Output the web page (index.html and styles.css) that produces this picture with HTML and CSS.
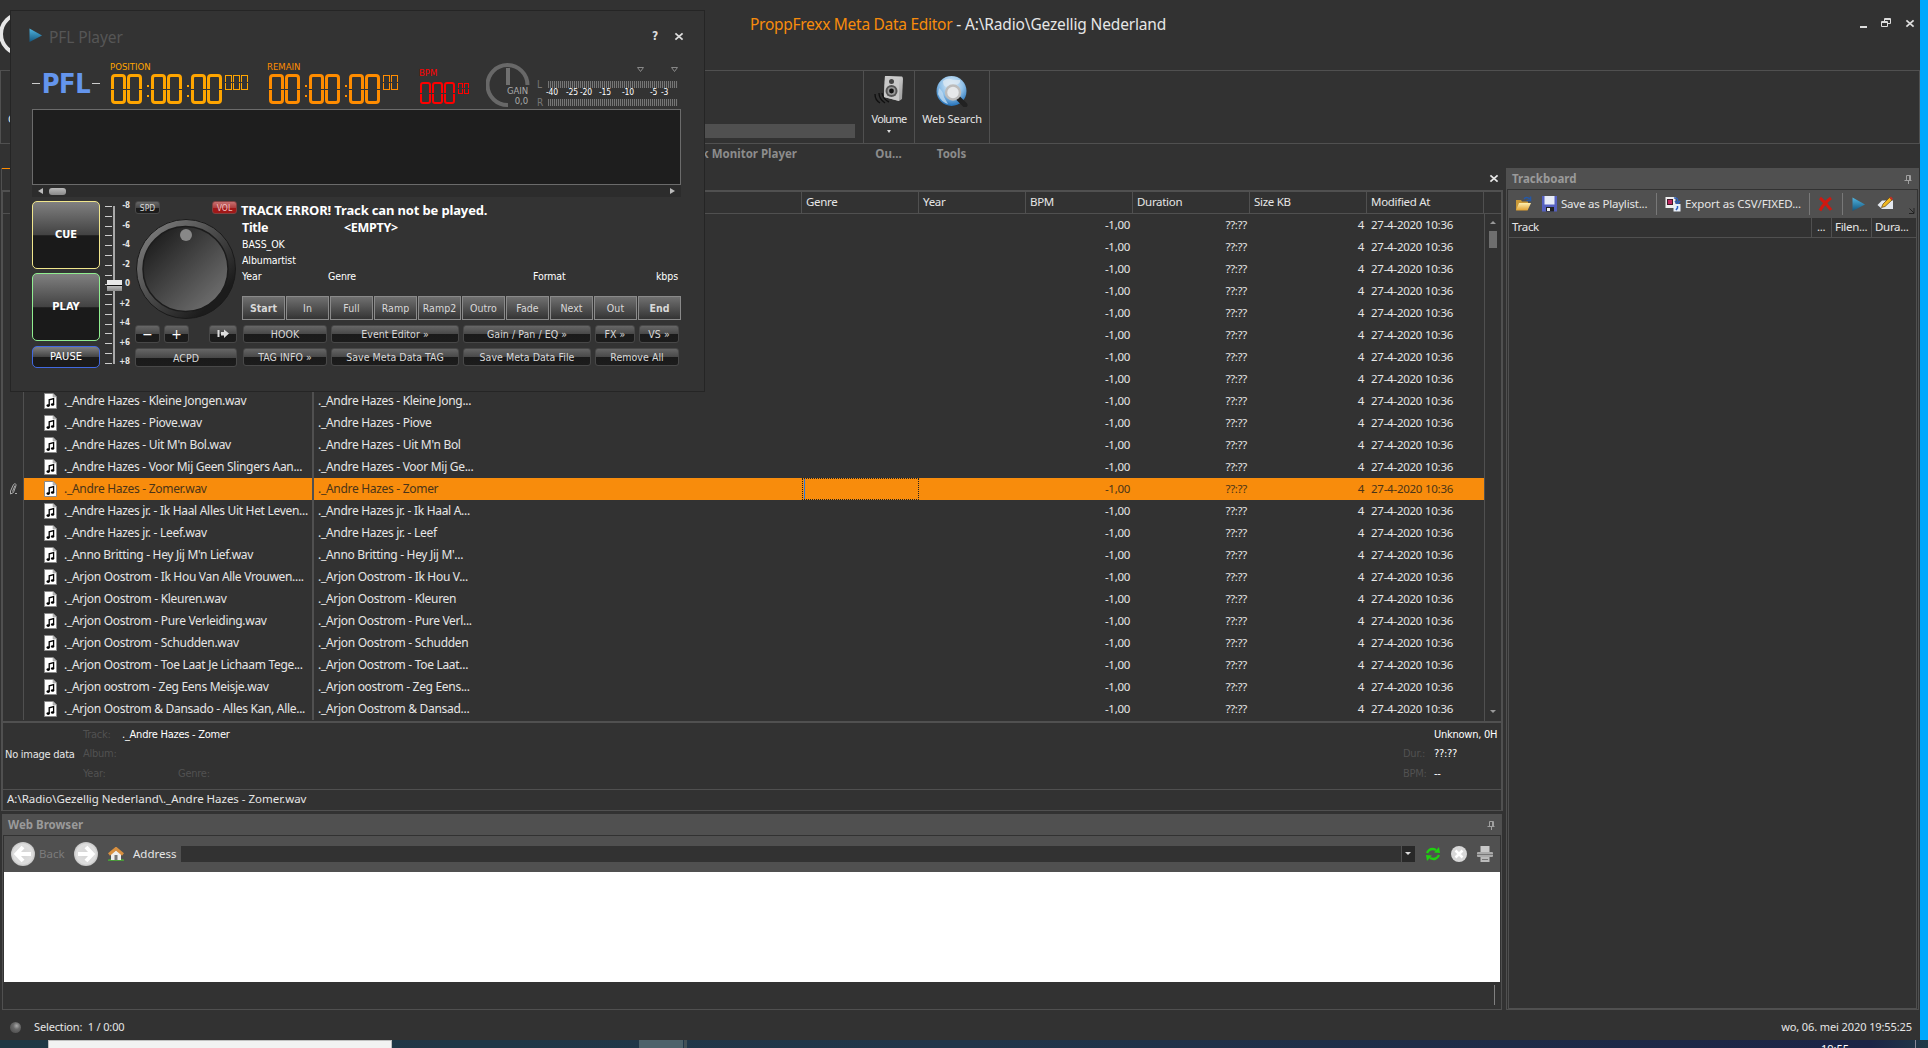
FILE: index.html
```html
<!DOCTYPE html>
<html lang="nl">
	<head>
		<meta charset="utf-8">
		<title>ProppFrexx Meta Data Editor</title>
		<link rel="stylesheet" href="styles.css">
	</head>
	<body>
		<svg class="defs" width="0" height="0">
			<defs>
				<linearGradient id="blue" x1="0" y1="0" x2="0" y2="1"><stop offset="0" stop-color="#4fb4e0"/><stop offset="1" stop-color="#14567e"/></linearGradient>
				<linearGradient id="folder" x1="0" y1="0" x2="0" y2="1"><stop offset="0" stop-color="#fff0b0"/><stop offset="1" stop-color="#e0a030"/></linearGradient>
				<linearGradient id="silver" x1="0" y1="0" x2="1" y2="1"><stop offset="0" stop-color="#eee"/><stop offset="1" stop-color="#999"/></linearGradient>
				<linearGradient id="rim" x1="0" y1="0" x2="1" y2="1"><stop offset="0.1" stop-color="#7c7c7c"/><stop offset="0.8" stop-color="#1c1c1c"/></linearGradient>
				<linearGradient id="knob" x1="0" y1="0" x2="1" y2="1"><stop offset="0.1" stop-color="#1c1c1c"/><stop offset="0.9" stop-color="#707070"/></linearGradient>
				<radialGradient id="globe" cx="0.5" cy="0.3" r="0.7"><stop offset="0" stop-color="#eaf4fc"/><stop offset="0.55" stop-color="#8fc0e8"/><stop offset="1" stop-color="#2270b8"/></radialGradient>
				<radialGradient id="ball" cx="0.5" cy="0.5" r="0.5"><stop offset="0" stop-color="#d4d4d4"/><stop offset="0.8" stop-color="#dedede"/><stop offset="1" stop-color="#c4c4c4"/></radialGradient>
				<symbol id="note" viewBox="0 0 13 16">
					<path d="M0.5 0.5H9L12.5 4V15.5H0.5Z" fill="#fff" stroke="#8a8a8a"/>
					<path d="M9 0.5V4H12.5Z" fill="#bbb" stroke="#999" stroke-width="0.5"/>
					<path d="M5.2 12.5V6.8L9.6 5.6V11.3" fill="none" stroke="#000" stroke-width="1.3"/>
					<ellipse cx="4.2" cy="12.6" rx="1.7" ry="1.3"/><ellipse cx="8.6" cy="11.5" rx="1.7" ry="1.3"/>
				</symbol>
				<symbol id="play" viewBox="0 0 14 15">
					<path d="M0.5 0.5L13 7.5L0.5 14Z" fill="url(#blue)"/>
				</symbol>
				<symbol id="cross" viewBox="0 0 10 10">
					<path d="M1 1.5L9 8.5M9 1.5L1 8.5" stroke="currentColor" stroke-width="2"/>
				</symbol>
				<symbol id="pin" viewBox="0 0 8 9">
					<path d="M2.5 0.5H6.5V5.5M2.5 0.5V5.5M0.5 5.5H7.5M4.5 6V9M5.5 0.5V5.5" stroke="#a0a0a0" fill="none"/>
				</symbol>
			</defs>
		</svg>

		<div class="app">
			<div class="titlebar">
				<svg class="orb" width="12" height="40" viewBox="0 0 12 40"><circle cx="21" cy="20" r="20" fill="none" stroke="#e8e8e8" stroke-width="4"/></svg>
				<h1 class="caption"><span>ProppFrexx Meta Data Editor</span> - A:\Radio\Gezellig Nederland</h1>
				<div class="winbtns">
					<svg width="8" height="10"><rect y="8" width="7" height="2" fill="#ddd"/></svg>
					<svg width="10" height="10" fill="none" stroke="#ddd"><path d="M3.5 3V0.5H9.5V5.5H7M3.5 1.5H9.5M0.5 3.5H6.5V8.5H0.5ZM0.5 4.5H6.5"/></svg>
					<svg class="x" width="10" height="9"><use href="#cross"/></svg>
				</div>
			</div>

			<div class="ribbon">
				<div class="group hiddengroup"><span>C</span><div class="graybox"></div></div>
				<div class="group volume">
					<svg width="32" height="32" viewBox="0 0 32 32">
						<path d="M2 19Q2 25 7 28M6 18Q6 24 12 28M9 18Q10 24 16 27" fill="none" stroke="#111" stroke-width="1.4"/>
						<path d="M12 1L29 1.5Q30 2 30 4L29 24L26 26L11 22Z" fill="url(#silver)"/>
						<path d="M12 1L26 3V26L11 22Z" fill="#c8c8c8"/>
						<circle cx="18.500" cy="6.500" r="2.500" fill="#444"/>
						<circle cx="18.500" cy="16" r="6" fill="#555"/><circle cx="18.500" cy="16" r="4" fill="#999"/><circle cx="18.500" cy="16" r="2.400" fill="#111"/>
					</svg>
					<span>Volume</span>
					<i class="down"></i>
				</div>
				<div class="group search">
					<svg width="32" height="32" viewBox="0 0 32 32">
						<circle cx="15.500" cy="16" r="15" fill="url(#globe)"/>
						<path d="M7 6Q12 2 17 5L24 5Q25 9 19 10Q14 9 10 12Q7 11 7 6Z" fill="#dce8f2" opacity=".8"/>
						<path d="M3 13Q7 16 8 22L12 29Q5 27 2 19Z" fill="#bfdcf4" opacity=".8"/>
						<path d="M22 23L29 30" stroke="#222" stroke-width="5" stroke-linecap="round"/>
						<circle cx="17" cy="17.500" r="7" fill="#e6e8ea" stroke="#bcbcbc" stroke-width="2.500"/>
					</svg>
					<span>Web Search</span>
				</div>
			</div>
			<div class="groupnames"><span>Track Monitor Player</span><span>Ou...</span><span>Tools</span></div>

			<div class="workspace">
				<div class="left">
					<div class="tabs"><svg width="10" height="9"><use href="#cross"/></svg></div>
					<div class="editor">
						<div class="row head">
							<span></span><span></span><span></span><span>Genre</span><span>Year</span><span>BPM</span><span>Duration</span><span>Size KB</span><span>Modified At</span>
						</div>
						<div class="gridbody">
							<div class="rows" id="rows"></div>
							<div class="scroll"><i class="up"></i><i class="thumb"></i><i class="down"></i></div>
						</div>
						<div class="details">
							<div class="noimage">No image data</div>
							<div class="tags">
								<div><label>Track:</label><b>._Andre Hazes - Zomer</b></div>
								<div><label>Album:</label></div>
								<div><label class="year">Year:</label><label>Genre:</label></div>
							</div>
							<div class="info">
								<div><label></label><b>Unknown, 0H</b></div>
								<div><label>Dur.:</label><b>??:??</b></div>
								<div><label>BPM:</label><b>--</b></div>
							</div>
						</div>
						<div class="path">A:\Radio\Gezellig Nederland\._Andre Hazes - Zomer.wav</div>
					</div>

					<div class="panel web">
						<div class="paneltitle"><span>Web Browser</span><svg width="8" height="9"><use href="#pin"/></svg></div>
						<div class="webbar">
							<svg width="24" height="24"><circle cx="12" cy="12" r="12" fill="url(#ball)"/><path d="M12 5L5.500 12L12 19M6 12H20" fill="none" stroke="#fff" stroke-width="4"/></svg>
							<span class="off">Back</span>
							<svg class="fwd" width="24" height="24"><circle cx="12" cy="12" r="12" fill="url(#ball)"/><path d="M12 5L18.500 12L12 19M18 12H4" fill="none" stroke="#fff" stroke-width="4"/></svg>
							<svg class="home" width="16" height="15"><path d="M0 12.500Q8 10 16 12.500V14H0Z" fill="#4a9a3a"/><path d="M3 7L8 3L13 7V13H3Z" fill="#eee"/><path d="M1 7.500L8 1.500L15 7.500" fill="none" stroke="#d89040" stroke-width="3"/><rect x="6.500" y="8" width="3" height="5" fill="#777"/></svg>
							<span class="addr">Address</span>
							<div class="input"></div>
							<div class="drop"><i class="down"></i></div>
							<svg class="reload" width="16" height="16" viewBox="0 0 16 16"><path d="M2 7Q5 1 11 4M14 9Q11 15 5 12" fill="none" stroke="#1fd010" stroke-width="2.400"/><path d="M9 6.500L15 7L14 1ZM7 9.500L1 9L2 15Z" fill="#1fd010"/></svg>
							<svg class="stop" width="16" height="16"><circle cx="8" cy="8" r="8" fill="#d8d8d8"/><path d="M4.500 4.500L11.500 11.500M11.500 4.500L4.500 11.500" stroke="#fff" stroke-width="2.500"/></svg>
							<svg width="16" height="16"><rect x="3.500" width="9" height="7" fill="#c8c8c8"/><rect y="6" width="16" height="5" rx="1" fill="#aaa"/><path d="M0 8.500H16" stroke="#777"/><rect x="3.500" y="11" width="9" height="5" fill="#bbb"/><path d="M5 13.500H11" stroke="#777"/></svg>
						</div>
						<div class="page"></div>
						<div class="webfoot"></div>
					</div>
				</div>

				<div class="panel board">
					<div class="paneltitle"><span>Trackboard</span><svg width="8" height="9"><use href="#pin"/></svg></div>
					<div class="inner">
						<div class="tools">
							<svg width="17" height="16"><path d="M1 4H6L7 5.500H13V14H1Z" fill="#c89838"/><path d="M1 14.500L4 7H16L12.500 14.500Z" fill="url(#folder)"/><path d="M9 3Q12 0 14.500 3M15.500 0.500V4.500H11.500" fill="none" stroke="#2458a8" stroke-width="1.500"/></svg>
							<svg class="floppy" width="16" height="16"><rect width="15" height="15.500" fill="#5560c0"/><rect x="2.500" width="10" height="8.500" fill="#e8ecf8"/><rect x="4" y="11" width="8" height="4.500" fill="#222"/><rect x="5" y="12" width="3" height="3" fill="#eee"/></svg>
							<span class="t1">Save as Playlist...</span>
							<i class="sep"></i>
							<svg class="export" width="17" height="16"><rect x="0.500" y="1" width="10" height="11" fill="#eee"/><rect x="2.500" y="3.500" width="5" height="5" fill="#c02860" stroke="#401828"/><path d="M9 2Q13.500 1.500 12.500 6M10 5L12.500 8L15 5" fill="none" stroke="#3060b8" stroke-width="1.500"/><rect x="8.500" y="8" width="7" height="7.500" fill="#e8eef8"/><path d="M12.500 10V12L11 14" stroke="#2860c8" fill="none" stroke-width="1.500"/></svg>
							<span class="t2">Export as CSV/FIXED...</span>
							<i class="sep"></i>
							<svg class="del" width="15" height="16"><path d="M2 2Q8 7 13 14M13 2Q6 7 2 14.500" fill="none" stroke="#d01810" stroke-width="3"/></svg>
							<i class="sep"></i>
							<svg class="go" width="14" height="15"><use href="#play"/></svg>
							<svg width="17" height="16"><path d="M0.500 9L5 4.500H16V13H5Z" fill="#e4e8ee"/><path d="M4.500 11.500L6 8L12.500 1.500L15 4L8 10.500Z" fill="#f0b820" stroke="#604010" stroke-width="0.7"/><path d="M12.500 2L14 0.500L16 3L14.500 4.300Z" fill="#c83020"/></svg>
							<svg class="more" width="6" height="6"><path d="M0.500 0.500L5 5M5 0V5.500H0" fill="none" stroke="#222"/></svg>
						</div>
						<div class="boardhead"><span>Track</span><span>...</span><span>Filen...</span><span>Dura...</span></div>
					</div>
				</div>
			</div>

			<div class="status"><i class="led"></i><span>Selection:&nbsp; 1 / 0:00</span><span class="clock">wo, 06. mei 2020 19:55:25</span></div>
		</div>
		<div class="desktop"></div>
		<div class="taskbar"><i class="find"></i><i class="task"></i><i class="task2"></i><span>19:55</span></div>

		<!-- floating player window -->
		<div class="player">
			<div class="ptitle">
				<svg width="14" height="15"><use href="#play"/></svg>
				<span>PFL Player</span>
				<b>?</b>
				<svg class="px" width="10" height="9"><use href="#cross"/></svg>
			</div>

			<div class="readouts">
				<div class="pfl"><i></i><b>PFL</b><i></i></div>
				<div class="lcd pos">
					<label>POSITION</label>
					<div class="digits"><i></i><i></i><u></u><i></i><i></i><u></u><i></i><i></i><s></s><s></s><s></s></div>
				</div>
				<div class="lcd rem">
					<label>REMAIN</label>
					<div class="digits"><i></i><i></i><u></u><i></i><i></i><u></u><i></i><i></i><s></s><s></s></div>
				</div>
				<div class="lcd bpm">
					<label>BPM</label>
					<div class="digits"><i></i><i></i><i></i><s></s><s></s></div>
				</div>
				<svg class="gain" width="44" height="46">
					<path d="M22 42A20 20 0 1 1 41.500 22" fill="none" stroke="#686868" stroke-width="4"/>
					<path d="M22 5V22" stroke="#707070" stroke-width="4"/>
					<text x="42" y="31" text-anchor="end">GAIN</text>
					<text x="42" y="41" text-anchor="end">0,0</text>
				</svg>
				<div class="meter">
					<div class="marks"><svg width="42" height="6"><path d="M0.500 0.500H6.500L3.500 4.500ZM34.500 0.500H40.500L37.500 4.500Z" fill="none" stroke="#888"/></svg></div>
					<div class="line"><span>L</span><i></i></div>
					<div class="scale"><span>-40</span><span>-25</span><span>-20</span><span>-15</span><span>-10</span><span>-5</span><span>-3</span></div>
					<div class="line"><span>R</span><i></i></div>
				</div>
			</div>

			<div class="wave"></div>
			<div class="wavebar"><i class="la"></i><i class="th"></i><i class="ra"></i></div>

			<div class="deck">
				<div class="transport">
					<button class="big cue">CUE</button>
					<button class="big go">PLAY</button>
					<button class="big pause">PAUSE</button>
				</div>
				<div class="fader">
					<div class="ticks"></div>
					<div class="track"><i></i></div>
					<div class="nums"><span>-8</span><span>-6</span><span>-4</span><span>-2</span><span>0</span><span>+2</span><span>+4</span><span>+6</span><span>+8</span></div>
				</div>
				<div class="jog">
					<div class="modes"><button>SPD</button><button class="red">VOL</button></div>
					<svg width="102" height="102">
						<circle cx="51" cy="51" r="49.500" fill="url(#rim)" stroke="#1a1a1a"/>
						<circle cx="50.500" cy="51" r="42.500" fill="url(#knob)" stroke="#1c1c1c" stroke-width="1.500"/>
						<circle cx="51" cy="17" r="6" fill="#888"/>
					</svg>
					<div class="nudge"><button>−</button><button>+</button>
						<button class="jump"><svg width="13" height="10"><path d="M1.500 1V8" stroke="#ddd" stroke-width="2"/><path d="M4 3H7V0.500L12 4.500L7 9V6.500H4Z" fill="#ddd"/></svg></button>
					</div>
					<button class="acpd">ACPD</button>
				</div>
				<div class="trackinfo">
					<div class="l1">TRACK ERROR! Track can not be played.</div>
					<div class="l2"><span>Title</span><span>&lt;EMPTY&gt;</span></div>
					<div class="l3">BASS_OK</div>
					<div class="l3">Albumartist</div>
					<div class="l4"><span>Year</span><span>Genre</span><span>Format</span><span>kbps</span></div>
					<div class="cues"><button><b>Start</b></button><button>In</button><button>Full</button><button>Ramp</button><button>Ramp2</button><button>Outro</button><button>Fade</button><button>Next</button><button>Out</button><button><b>End</b></button></div>
					<div class="actions">
						<button class="w2">HOOK</button><button class="w3">Event Editor »</button><button class="w3">Gain / Pan / EQ »</button><button>FX »</button><button>VS »</button>
						<button class="w2">TAG INFO »</button><button class="w3">Save Meta Data TAG</button><button class="w3">Save Meta Data File</button><button class="w2">Remove All</button>
					</div>
				</div>
			</div>
		</div>
		<script src="script.js"></script>
	</body>
</html>
```
FILE: script.js
```js
(function(){
	// [filename, title], the first rows lie under the player window
	var files = [
		['',''],['',''],['',''],['',''],['',''],['',''],['',''],['',''],
		['Andre Hazes - Kleine Jongen.wav', 'Andre Hazes - Kleine Jong...'],
		['Andre Hazes - Piove.wav', 'Andre Hazes - Piove'],
		["Andre Hazes - Uit M'n Bol.wav", "Andre Hazes - Uit M'n Bol"],
		['Andre Hazes - Voor Mij Geen Slingers Aan...', 'Andre Hazes - Voor Mij Ge...'],
		['Andre Hazes - Zomer.wav', 'Andre Hazes - Zomer'],
		['Andre Hazes jr. - Ik Haal Alles Uit Het Leven...', 'Andre Hazes jr. - Ik Haal A...'],
		['Andre Hazes jr. - Leef.wav', 'Andre Hazes jr. - Leef'],
		["Anno Britting - Hey Jij M'n Lief.wav", "Anno Britting - Hey Jij M'..."],
		['Arjon Oostrom - Ik Hou Van Alle Vrouwen....', 'Arjon Oostrom - Ik Hou V...'],
		['Arjon Oostrom - Kleuren.wav', 'Arjon Oostrom - Kleuren'],
		['Arjon Oostrom - Pure Verleiding.wav', 'Arjon Oostrom - Pure Verl...'],
		['Arjon Oostrom - Schudden.wav', 'Arjon Oostrom - Schudden'],
		['Arjon Oostrom - Toe Laat Je Lichaam Tege...', 'Arjon Oostrom - Toe Laat...'],
		['Arjon oostrom - Zeg Eens Meisje.wav', 'Arjon oostrom - Zeg Eens...'],
		['Arjon Oostrom & Dansado - Alles Kan, Alle...', 'Arjon Oostrom & Dansad...']
	];
	var selected = 12;
	var pencil = '<svg width="8" height="12"><path d="M1.500 8L4.500 1.500Q7 -0.500 7 2.500L4.500 9.500L1.500 11ZM3.500 8.500L6 2.500M6 10.500H8" fill="none" stroke="#aaa"/></svg>';
	var html = '';

	for(var i = 0; i < files.length; i++) {
		var name = files[i][0] ? '._' + files[i][0].replace('&', '&amp;') : '';
		var title = files[i][1] ? '._' + files[i][1].replace('&', '&amp;') : '';
		html += '<div class="row' + (i == selected ? ' sel' : '') + '">' +
			'<span class="ind">' + (i == selected ? pencil : '') + '</span>' +
			'<span class="file">' + (name ? '<svg width="13" height="16"><use href="#note"/></svg>' : '') + name + '</span>' +
			'<span class="ttl">' + title + '</span><span class="genre"></span><span></span>' +
			'<span class="num">-1,00</span><span class="num">??:??</span><span class="num">4</span><span class="date">27-4-2020 10:36</span></div>';
	}
	document.querySelector('#rows').innerHTML = html;
})();
```
FILE: styles.css
```css
* {
	box-sizing: border-box;
}

body {
	margin: 0;
	width: 1928px;
	height: 1048px;
	overflow: hidden;
	display: grid;
	grid-template-columns: 1920px 8px;
	grid-template-rows: 1040px 8px;
	background: #323232;
	color: #e6e6e6;
	font-family: "Noto Sans", "Open Sans", sans-serif;
	font-size: 11.5px;
	line-height: 16px;
	white-space: nowrap;
}

svg {
	display: block;
	flex: none;
}

button {
	font: inherit;
	padding: 0;
	margin: 0;
	border: none;
}

.defs {
	position: absolute;
}

.desktop {
	background: #00a8fc;
}

.app {
	display: flex;
	flex-direction: column;
	overflow: hidden;
}

.titlebar {
	height: 70px;
	display: flex;
	flex: none;
	padding-top: 14px;
}

.caption {
	margin: 0 0 0 738px;
	width: 1100px;
	font-size: 15.5px;
	line-height: 20px;
	font-weight: normal;
	letter-spacing: -0.15px;
}

.caption span {
	color: #f88c0c;
	letter-spacing: -0.28px;
}

.winbtns {
	display: flex;
	gap: 13px;
	padding: 4px 0 0 10px;
	color: #ddd;
}

.winbtns .x {
	margin-left: 1px;
	margin-top: 1px;
}

.ribbon {
	height: 74px;
	flex: none;
	display: flex;
	border: 1px solid #505050;
}

.group {
	border-right: 1px solid #505050;
	display: flex;
	flex-direction: column;
	align-items: center;
	padding-top: 4px;
}

.group span {
	margin-top: 4px;
	font-size: 11px;
	letter-spacing: -0.1px;
}

.hiddengroup {
	width: 863px;
	flex-direction: row;
	align-items: flex-start;
	padding: 36px 8px 0 7px;
}

.graybox {
	width: 300px;
	height: 14px;
	background: #505050;
	margin: 17px 0 0 auto;
}

.volume {
	width: 51px;
}

.volume span {
	letter-spacing: -0.9px;
}

.volume span {
	letter-spacing: -0.7px;
}

.search {
	width: 75px;
}

i.down, i.up {
	border: 3px solid transparent;
	border-top-color: #ddd;
	border-bottom: none;
	width: 0;
	height: 0;
}

i.up {
	border-top: none;
	border-bottom: 3px solid #999;
}

.volume i.down {
	border-width: 2.5px;
	border-top-width: 3px;
	border-bottom: none;
	margin-top: 3px;
}

.groupnames {
	height: 24px;
	flex: none;
	display: grid;
	grid-template-columns: 797px 66px 51px 75px;
	line-height: 20px;
	font-weight: bold;
	color: #8c8c8c;
	text-align: center;
}

.groupnames span:first-child {
	text-align: right;
}

.groupnames span:nth-child(2) {
	grid-column: 3;
}

.workspace {
	display: flex;
	gap: 3px;
	height: 842px;
}

.left {
	width: 1503px;
	padding-left: 1px;
	display: flex;
	flex-direction: column;
}

.tabs {
	height: 22px;
	border-left: 1px solid #505050;
	display: flex;
	justify-content: flex-end;
	padding: 6px 4px 0 0;
	background: linear-gradient(#ff8c00, #ff8c00) 0 0 / 30px 1px no-repeat;
}

.editor {
	height: 621px;
	flex: none;
	border: 2px solid #505050;
	border-bottom-width: 1px;
}

.row {
	display: grid;
	grid-template-columns: 21px 290px 488px 117px 107px 107px 117px 117px 117px;
	height: 22px;
	line-height: 21px;
	letter-spacing: -0.3px;
}

.row.head {
	border-bottom: 1px solid #505050;
	line-height: 20px;
}

.head span {
	border-right: 1px solid #505050;
	padding-left: 4px;
}

.gridbody {
	height: 509px;
	display: flex;
	border-bottom: 2px solid #505050;
}

.rows {
	width: 1481px;
}

.ind {
	border-right: 1px solid #505050;
	padding: 5px 0 0 6px;
}

.file {
	display: flex;
	gap: 7px;
	padding-left: 20px;
	border-right: 2px solid #505050;
	font-size: 12px;
}

.file svg {
	margin-top: 3px;
}

.ttl {
	padding-left: 4px;
	font-size: 12px;
}

.num {
	text-align: right;
	padding-right: 3px;
}

.date {
	padding-left: 4px;
	letter-spacing: -0.25px;
}

.sel span:not(.ind) {
	background: #f88c0c;
	color: #4a3418;
}

.sel .genre {
	outline: 1px dotted #222;
	outline-offset: -1px;
	box-shadow: inset 2px 0 #f88c0c, inset 3px 0 #2878e0;
}

.scroll {
	width: 17px;
	border-left: 1px solid #505050;
	display: flex;
	flex-direction: column;
	align-items: center;
	padding: 7px 0 8px;
}

.scroll .thumb {
	width: 8px;
	height: 17px;
	margin-top: 7px;
	background: #6e6e6e;
}

.scroll .down {
	margin-top: auto;
	border-top-color: #999;
}

.details {
	height: 67px;
	display: flex;
	border-bottom: 1px solid #505050;
	font-family: "DejaVu Sans Condensed", "DejaVu Sans", sans-serif;
	font-stretch: condensed;
	font-size: 11px;
	letter-spacing: -0.25px;
}

.details label {
	color: #515151;
}

.details b {
	font-weight: normal;
	color: #fff;
}

.noimage {
	width: 80px;
	padding: 24px 0 0 2px;
}

.tags {
	width: 1320px;
}

.tags, .info {
	display: flex;
	flex-direction: column;
	gap: 4px;
	padding-top: 4px;
}

.tags > div, .info > div {
	display: flex;
	height: 16px;
}

.tags > div:nth-child(2), .info > div:nth-child(2) {
	margin-top: -1px;
}

.tags label {
	width: 39px;
}

.tags .year {
	width: 95px;
}

.info {
	width: 98px;
}

.info label {
	width: 31px;
	flex: none;
}

.path {
	padding: 1px 4px;
	letter-spacing: -0.02px;
}

.panel {
	border: 1px solid #505050;
}

.paneltitle {
	height: 20px;
	background: #505050;
	display: flex;
	justify-content: space-between;
	align-items: center;
	padding: 0 6px 0 5px;
	font-weight: bold;
	color: #9a9a9a;
}

.web {
	margin: 3px 1px 0;
	height: 196px;
}

.webbar {
	height: 36px;
	margin: 1px 1px 0;
	background: #505050;
	display: flex;
	align-items: center;
	padding-left: 7px;
}

.webbar span {
	margin-top: -1px;
}

.webbar .off {
	width: 39px;
	padding-left: 4px;
	color: #7c7c7c;
}

.webbar .home {
	margin: 0 9px 0 10px;
}

.webbar .addr {
	width: 48px;
	letter-spacing: 0;
}

.input {
	width: 1220px;
	height: 16px;
	background: #323232;
}

.drop {
	width: 13px;
	height: 16px;
	margin-left: 1px;
	background: #282828;
	padding: 6px 0 0 3px;
}

.drop i {
	display: block;
}

.reload {
	margin-left: 10px;
}

.stop {
	margin: 0 10px;
}

.page {
	height: 110px;
	margin: 0 1px;
	background: #fff;
}

.webfoot {
	height: 20px;
	margin: 3px 6px 0 0;
	border-right: 1px solid #808080;
}

.board {
	width: 413px;
}

.inner {
	height: 819px;
	margin: 1px 1px 0;
	border: 1px solid #505050;
	border-top: none;
}

.tools {
	height: 28px;
	background: #505050;
	display: flex;
	align-items: center;
	padding-left: 6px;
	letter-spacing: -0.2px;
}

.tools span {
	margin-top: -1px;
}

.floppy {
	margin: 0 3px 0 10px;
}

.t1 {
	width: 95px;
}

.sep {
	width: 1px;
	height: 22px;
	background: #787878;
}

.export {
	margin: 0 3px 0 8px;
}

.t2 {
	width: 124px;
	letter-spacing: -0.1px;
}

.del {
	margin: 0 9px 0 8px;
}

.go {
	margin: 0 11px 0 9px;
}

.more {
	margin: 14px 0 0 15px;
}

.boardhead {
	display: grid;
	grid-template-columns: 303px 20px 40px 1fr;
	height: 20px;
	line-height: 18px;
	border-bottom: 1px solid #505050;
	letter-spacing: -0.3px;
}

.boardhead span {
	padding-left: 3px;
	border-right: 1px solid #505050;
}

.boardhead span:nth-child(2) {
	padding-left: 5px;
}

.boardhead span:last-child {
	border-right: none;
}

.status {
	height: 30px;
	display: flex;
	align-items: center;
	padding: 4px 8px 0 10px;
	font-size: 11px;
	letter-spacing: -0.15px;
}

.led {
	width: 11px;
	height: 11px;
	border-radius: 50%;
	background: radial-gradient(circle at 60% 35%, #aaa, #6a6a6a 35%, #444);
	margin-right: 13px;
}

.clock {
	margin-left: auto;
	letter-spacing: -0.1px;
}

.taskbar {
	grid-column: 1 / 3;
	height: 8px;
	overflow: hidden;
	display: flex;
	background: linear-gradient(90deg, #1f3844, #21364a 50%, #1c2446 97%, #203a48);
	color: #fff;
	font-size: 11px;
}

.find {
	width: 344px;
	height: 9px;
	margin-left: 48px;
	background: #f2f2f2;
	border: 1px solid #c0c0c0;
}

.task {
	width: 44px;
	margin-left: 247px;
	background: #4d626a;
}

.task2 {
	width: 3px;
	margin-left: 1px;
	background: #435055;
}

.taskbar span {
	margin-left: 1134px;
	padding-top: 1px;
	width: 95px;
	border-right: 1px solid #889;
}

.player {
	position: absolute;
	left: 10px;
	top: 10px;
	width: 695px;
	height: 382px;
	border: 1px solid #252525;
	background: #333;
	padding-left: 21px;
	font-family: "DejaVu Sans Condensed", "DejaVu Sans", sans-serif;
	font-stretch: condensed;
	font-size: 10.5px;
	letter-spacing: -0.1px;
}

.ptitle {
	height: 50px;
	display: flex;
	margin-left: -3px;
}

.ptitle svg {
	margin-top: 17px;
}

.ptitle span {
	font: 15.5px/20px "Noto Sans", sans-serif;
	color: #565656;
	margin: 16px 0 0 6px;
	width: 603px;
}

.ptitle b {
	width: 22px;
	margin-top: 17px;
	font-size: 12px;
	color: #ddd;
}

.ptitle .px {
	margin-top: 21px;
	color: #ddd;
}

.readouts {
	height: 48px;
	display: flex;
}

.pfl {
	width: 78px;
	height: 45px;
	display: flex;
	align-items: center;
}

.pfl i {
	width: 8px;
	height: 1px;
	background: #ccc;
}

.pfl b {
	width: 52px;
	text-align: center;
	font-size: 27px;
	letter-spacing: -0.4px;
	color: #6495ed;
}

.lcd label {
	display: block;
	font-size: 9.5px;
	line-height: 12px;
	letter-spacing: 0;
}

.digits {
	display: flex;
	gap: 1px;
	padding: 1px 0 0 1px;
}

/* a zero on a segment display: a ring, broken in the middle */
.digits i, .digits s {
	width: 15px;
	height: 30px;
	border: 3px solid;
	border-radius: 4px;
	display: flex;
	align-items: center;
	justify-content: center;
}

.digits i::after, .digits s::after {
	content: "";
	width: 17px;
	height: 1px;
	flex: none;
	background: #333;
}

.digits s {
	width: 7px;
	height: 15px;
	border-width: 1px;
	border-radius: 0;
	margin-top: 1px;
}

.digits i + s {
	margin-left: 2px;
}

.digits s::after {
	width: 7px;
}

.digits u {
	width: 2px;
	height: 12px;
	border-top: 2px solid;
	border-bottom: 2px solid;
	margin: 11px 1px 0 4px;
}

.pos {
	width: 158px;
	color: #ffa500;
}

.rem {
	width: 151px;
	color: #ff8c00;
}

.rem label {
	margin-left: -1px;
}

.bpm {
	width: 67px;
	padding-top: 6px;
	color: #f00;
}

.bpm .digits {
	padding-top: 3px;
}

.bpm .digits i {
	width: 11px;
	height: 22px;
	border-width: 2px;
	border-radius: 3px;
}

.bpm .digits i::after {
	width: 11px;
}

.bpm .digits s {
	width: 5px;
	height: 11px;
}

.gain {
	margin-top: 2px;
	font-size: 9.5px;
	fill: #aaa;
}

.meter {
	width: 142px;
	margin-left: 7px;
}

.marks {
	height: 18px;
	padding: 6px 0 0 100px;
}

.line {
	display: flex;
	height: 8px;
	color: #777;
	line-height: 12px;
}

.line span {
	width: 11px;
	font-size: 10px;
}

.line i {
	width: 130px;
	height: 7px;
	margin-top: 2px;
	background: repeating-linear-gradient(90deg, #757575 0 1px, #383838 1px 2px);
}

.scale {
	display: grid;
	grid-template-columns: 20px 14px 19px 23px 28px 11px 18px;
	height: 10px;
	padding-left: 9px;
	line-height: 10px;
	font-size: 8.5px;
	letter-spacing: -0.2px;
	color: #fff;
}

.wave {
	width: 649px;
	height: 76px;
	background: #1e1e1e;
	border: 1px solid #6b6b6b;
}

.wavebar {
	width: 649px;
	height: 12px;
	background: #2c2c2c;
	display: flex;
	align-items: center;
	padding: 0 6px;
}

.la, .ra {
	border: 3px solid transparent;
	border-right: 5px solid #bbb;
	border-left: none;
}

.ra {
	border-left: 5px solid #bbb;
	border-right: none;
	margin-left: auto;
}

.th {
	width: 17px;
	height: 7px;
	border-radius: 3px;
	margin-left: 6px;
	background: linear-gradient(#bbb, #888);
}

.deck {
	display: flex;
	padding-top: 4px;
}

.player button {
	color: #d8d8d8;
	background: linear-gradient(#666, #484848 50%, #1a1a1a 52%, #1c1c1c);
	border: 1px solid #484848;
	border-radius: 3px;
	display: flex;
	align-items: center;
	justify-content: center;
	letter-spacing: 0.05px;
}

.transport {
	width: 68px;
	display: flex;
	flex-direction: column;
}

.player .big {
	height: 68px;
	margin-bottom: 4px;
	border-radius: 5px;
	font-size: 11px;
	font-weight: bold;
	color: #fff;
	background: linear-gradient(#808080, #424242 50%, #1a1a1a 51%);
}

.player .cue {
	border-color: #f0e68c;
}

.player .go {
	margin: 0 0 5px;
	border-color: #90ee90;
}

.player .pause {
	height: 22px;
	font-weight: normal;
	border-color: #4169e1;
}

.fader {
	width: 35px;
	display: flex;
	padding: 5px 0 0 5px;
	height: 164px;
}

.ticks {
	width: 7px;
	height: 158px;
	background: repeating-linear-gradient(#ccc 0 1px, transparent 1px 9.8px);
}

.track {
	width: 2px;
	height: 158px;
	margin-left: 1px;
	background: #a8a8a8;
	display: flex;
	align-items: center;
	justify-content: center;
}

.track i {
	width: 15px;
	height: 11px;
	flex: none;
	background: linear-gradient(#e8e8e8 45%, #111 45% 54%, #bbb 54%, #888);
}

.nums {
	width: 15px;
	margin-top: -5px;
	font-size: 8px;
	font-weight: bold;
	text-align: right;
	display: flex;
	flex-direction: column;
}

.nums span {
	flex: none;
	height: 19.5px;
	line-height: 10px;
}

.jog {
	width: 102px;
	height: 168px;
}

.modes, .nudge {
	display: flex;
	justify-content: space-between;
	height: 13px;
}

.player .modes button {
	width: 25px;
	font-size: 8.5px;
}

.player .modes .red {
	color: #f0c0c0;
	background: linear-gradient(#c87070, #b04040 50%, #a01818 52%);
	border-color: #804040;
}

.jog > svg {
	margin: 4px 0 5px;
}

.nudge {
	height: 18px;
	gap: 4px;
	justify-content: flex-start;
}

.nudge button {
	width: 25px;
}

.player .nudge button {
	color: #fff;
	font-size: 14px;
}

.nudge .jump {
	width: 28px;
	margin-left: auto;
}

.acpd {
	width: 102px;
	height: 19px;
	margin-top: 5px;
}

.trackinfo {
	width: 446px;
	flex: none;
	padding-left: 5px;
	color: #fff;
}

.l1, .l2 {
	font: bold 13px/17px "Noto Sans", sans-serif;
	letter-spacing: -0.15px;
	height: 17px;
}

.l1 {
	margin-left: -1px;
	padding-top: 1px;
}

.l2 {
	display: grid;
	grid-template-columns: 102px 1fr;
	font-size: 12.5px;
	letter-spacing: -0.3px;
	padding-top: 1px;
}

.l3, .l4 {
	height: 16px;
	line-height: 16px;
	padding-top: 1px;
}

.l4 {
	display: grid;
	grid-template-columns: 86px 205px 123px 30px;
}

.cues {
	display: flex;
	gap: 1px;
	margin-top: 13px;
}

.player .cues button {
	width: 43px;
	height: 24px;
	border: 1px solid #8a8a8a;
	border-radius: 0;
	background: linear-gradient(#707070, #343434);
}

.actions {
	display: flex;
	flex-wrap: wrap;
	gap: 5px 4px;
	padding: 5px 0 0 1px;
}

.actions button {
	width: 40px;
	height: 18px;
}

.actions .w2 {
	width: 84px;
}

.actions .w3 {
	width: 128px;
}
```
